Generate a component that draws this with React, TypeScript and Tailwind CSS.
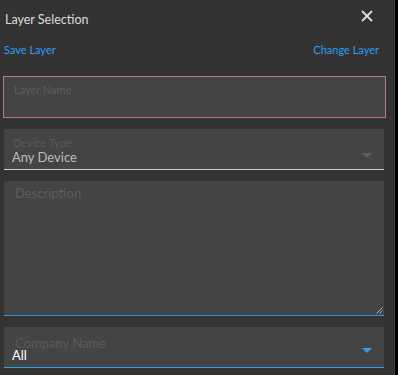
import React from "react";

export default function App() {
  const font = { fontFamily: '"Source Sans Pro", Lato, "Noto Sans", sans-serif' };
  return (
    <div className="flex w-[398px] h-[375px] bg-black overflow-hidden" style={font}>
      <div className="w-[394px] h-full bg-[#333333] flex flex-col">
        <div className="flex items-start justify-between h-[40px]">
          <div className="pl-[5px] pt-[12px] text-[12.5px] leading-[16px] text-[#dddddd]">Layer Selection</div>
          <svg className="mt-[10px] mr-[21px]" width="12" height="12" viewBox="0 0 12 12">
            <path d="M1.5 1.5 L10.5 10.5 M10.5 1.5 L1.5 10.5" stroke="#e0e0e0" strokeWidth="1.8" strokeLinecap="round" />
          </svg>
        </div>
        <div className="flex justify-between px-[4px] pr-[15px] text-[11px] leading-[14px] text-[#2b9ef0] h-[36px] pt-[3px]">
          <span>Save Layer</span>
          <span>Change Layer</span>
        </div>
        <div className="ml-[3px] w-[383px] h-[42px] border border-[#c0709f] bg-[#444444] px-[10px] pt-[6px]">
          <div className="text-[11px] leading-[14px] text-[#5c5c5c]">Layer Name</div>
        </div>
        <div className="mt-[11px] ml-[4px] w-[380px] h-[41px] bg-[#444444] border-b border-[#cfcfcf] flex items-end justify-between pl-[8px] pr-[12px] pb-[4px]">
          <div className="flex flex-col">
            <div className="pl-[1px] text-[11px] leading-[12px] text-[#5a5a5a]">Device Type</div>
            <div className="text-[13px] leading-[16px] text-[#bdbdbd]">Any Device</div>
          </div>
          <svg className="mb-[7px]" width="10" height="5" viewBox="0 0 10 5">
            <path d="M0 0 L10 0 L5 5 Z" fill="#5e5e5e" />
          </svg>
        </div>
        <div className="relative mt-[11px] ml-[4px] w-[380px] h-[135px] bg-[#444444] border-b border-[#2196f3] px-[11px] pt-[4px]">
          <div className="text-[13px] leading-[16px] text-[#5c5c5c]">Description</div>
          <svg className="absolute right-[1px] bottom-[1px]" width="7" height="7" viewBox="0 0 7 7">
            <path d="M6.5 0.5 L0.5 6.5 M6.5 3.5 L3.5 6.5" stroke="#bbbbbb" strokeWidth="0.9" />
          </svg>
        </div>
        <div className="mt-[11px] ml-[4px] w-[380px] h-[41px] bg-[#444444] border-b border-[#2d9fe8] flex items-end justify-between pl-[8px] pr-[12px] pb-[4px]">
          <div className="flex flex-col">
            <div className="pl-[3px] text-[13px] leading-[14px] text-[#5a5a5a]">Company Name</div>
            <div className="-mt-[3px] text-[13px] leading-[16px] text-[#ffffff]">All</div>
          </div>
          <svg className="mb-[10px]" width="10" height="5" viewBox="0 0 10 5">
            <path d="M0 0 L10 0 L5 5 Z" fill="#2b9ef0" />
          </svg>
        </div>
      </div>
      <div className="w-[1px] h-full bg-[#3c3c3c]" />
    </div>
  );
}
